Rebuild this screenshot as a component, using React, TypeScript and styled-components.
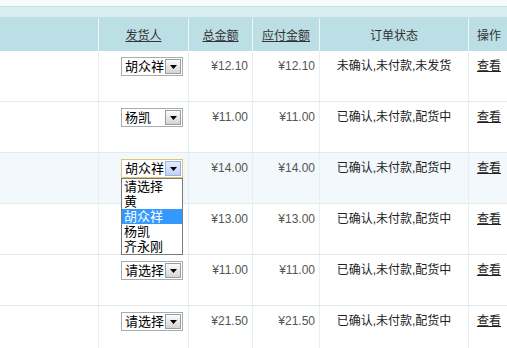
import React from "react";
import styled, { createGlobalStyle } from "styled-components";

const GlobalStyle = createGlobalStyle`
  html, body {
    margin: 0;
    padding: 0;
    background: #ffffff;
    overflow: hidden;
  }
  body {
    font-family: "Liberation Sans", "Noto Sans CJK SC", sans-serif;
    font-size: 12px;
    color: #333;
  }
`;

const COLS = "98px 90px 64px 67px 149px 41px";

const Wrapper = styled.div`
  width: 509px;
  background: #ffffff;
`;
const TopStrip = styled.div`
  height: 6px;
  background: #f5fafc;
  border-bottom: 1px solid #c9e2e8;
`;
const SubStrip = styled.div`
  height: 10px;
  background: #d9edf1;
  border-bottom: 1px solid #c2dfe5;
`;
const HeadRow = styled.div`
  display: grid;
  grid-template-columns: ${COLS};
  height: 33px;
  background: #bcdee5;
`;
const HeadCell = styled.div<{ $first?: boolean }>`
  display: flex;
  align-items: center;
  justify-content: center;
  border-left: ${(p) => (p.$first ? "none" : "1px solid #eef7f9")};
  font-size: 12px;
  color: #333;
  a {
    color: #333;
    text-decoration: underline;
  }
`;
const Row = styled.div<{ $hover?: boolean }>`
  display: grid;
  grid-template-columns: ${COLS};
  height: 51px;
  box-sizing: border-box;
  border-bottom: 1px solid #e0ecf0;
  background: ${(p) => (p.$hover ? "#f2f8fb" : "#ffffff")};
`;
const Cell = styled.div<{ $first?: boolean; $align?: string }>`
  border-left: ${(p) => (p.$first ? "none" : "1px solid #e6f0f3")};
  padding: 6px 4px 0 4px;
  text-align: ${(p) => p.$align || "left"};
  font-size: 12px;
  line-height: 18px;
  white-space: nowrap;
`;
const SenderCell = styled(Cell)`
  padding-left: 22px;
  position: relative;
`;
const Price = styled.span`
  color: #555;
  font-size: 12px;
`;
const Status = styled.span`
  color: #222;
`;
const ViewLink = styled.a`
  color: #222;
  text-decoration: underline;
`;
const SelectBox = styled.div<{ $open?: boolean }>`
  position: relative;
  width: 62px;
  height: 19px;
  box-sizing: border-box;
  border: 1px solid ${(p) => (p.$open ? "#e0c27a" : "#a5acb2")};
  background: #fff;
  display: flex;
  align-items: center;
  font-family: "Liberation Sans", "Noto Sans CJK SC", sans-serif;
  font-size: 13px;
  color: #000;
  padding-left: 3px;
`;
const SelectText = styled.span`
  flex: 1;
  line-height: 17px;
`;
const ArrowBtn = styled.span<{ $open?: boolean }>`
  width: 16px;
  height: 15px;
  margin-right: 1px;
  box-sizing: border-box;
  border: 1px solid ${(p) => (p.$open ? "#98b1e0" : "#9c9c9c")};
  background: ${(p) =>
    p.$open
      ? "linear-gradient(#e3ecfd, #bfd2f7)"
      : "linear-gradient(#fbfbfb, #d4d4d4)"};
  display: flex;
  align-items: center;
  justify-content: center;
  svg {
    display: block;
  }
`;
const OptionList = styled.div`
  position: absolute;
  left: 22px;
  top: 25px;
  width: 62px;
  box-sizing: border-box;
  border: 1px solid #7a7a7a;
  background: #fff;
  z-index: 5;
  font-family: "Liberation Sans", "Noto Sans CJK SC", sans-serif;
  font-size: 13px;
  color: #000;
`;
const Option = styled.div<{ $active?: boolean }>`
  height: 15px;
  line-height: 15px;
  overflow: hidden;
  padding-left: 2px;
  background: ${(p) => (p.$active ? "#3399ff" : "#fff")};
  color: ${(p) => (p.$active ? "#fff" : "#000")};
`;

const Arrow = () => (
  <svg width="7" height="4" viewBox="0 0 7 4">
    <path d="M0 0 H7 L3.5 4 Z" fill="#000" />
  </svg>
);

function FakeSelect({ value, open }: { value: string; open?: boolean }) {
  return (
    <SelectBox $open={open}>
      <SelectText>{value}</SelectText>
      <ArrowBtn $open={open}>
        <Arrow />
      </ArrowBtn>
    </SelectBox>
  );
}

const options = ["请选择", "黄", "胡众祥", "杨凯", "齐永刚"];

const rows = [
  { sender: "胡众祥", total: "12.10", pay: "12.10", status: "未确认,未付款,未发货" },
  { sender: "杨凯", total: "11.00", pay: "11.00", status: "已确认,未付款,配货中" },
  { sender: "胡众祥", total: "14.00", pay: "14.00", status: "已确认,未付款,配货中", open: true },
  { sender: "", total: "13.00", pay: "13.00", status: "已确认,未付款,配货中", hidden: true },
  { sender: "请选择", total: "11.00", pay: "11.00", status: "已确认,未付款,配货中" },
  { sender: "请选择", total: "21.50", pay: "21.50", status: "已确认,未付款,配货中" },
];

export default function App() {
  return (
    <Wrapper>
      <GlobalStyle />
      <TopStrip />
      <SubStrip />
      <HeadRow>
        <HeadCell $first />
        <HeadCell>
          <a>发货人</a>
        </HeadCell>
        <HeadCell>
          <a>总金额</a>
        </HeadCell>
        <HeadCell>
          <a>应付金额</a>
        </HeadCell>
        <HeadCell>订单状态</HeadCell>
        <HeadCell>操作</HeadCell>
      </HeadRow>
      {rows.map((r, i) => (
        <Row key={i} $hover={r.open}>
          <Cell $first />
          <SenderCell>
            {!r.hidden && <FakeSelect value={r.sender} open={r.open} />}
            {r.open && (
              <OptionList>
                {options.map((o) => (
                  <Option key={o} $active={o === r.sender}>
                    {o}
                  </Option>
                ))}
              </OptionList>
            )}
          </SenderCell>
          <Cell $align="right">
            <Price>¥{r.total}</Price>
          </Cell>
          <Cell $align="right">
            <Price>¥{r.pay}</Price>
          </Cell>
          <Cell $align="center">
            <Status>{r.status}</Status>
          </Cell>
          <Cell $align="center">
            <ViewLink>查看</ViewLink>
          </Cell>
        </Row>
      ))}
    </Wrapper>
  );
}
